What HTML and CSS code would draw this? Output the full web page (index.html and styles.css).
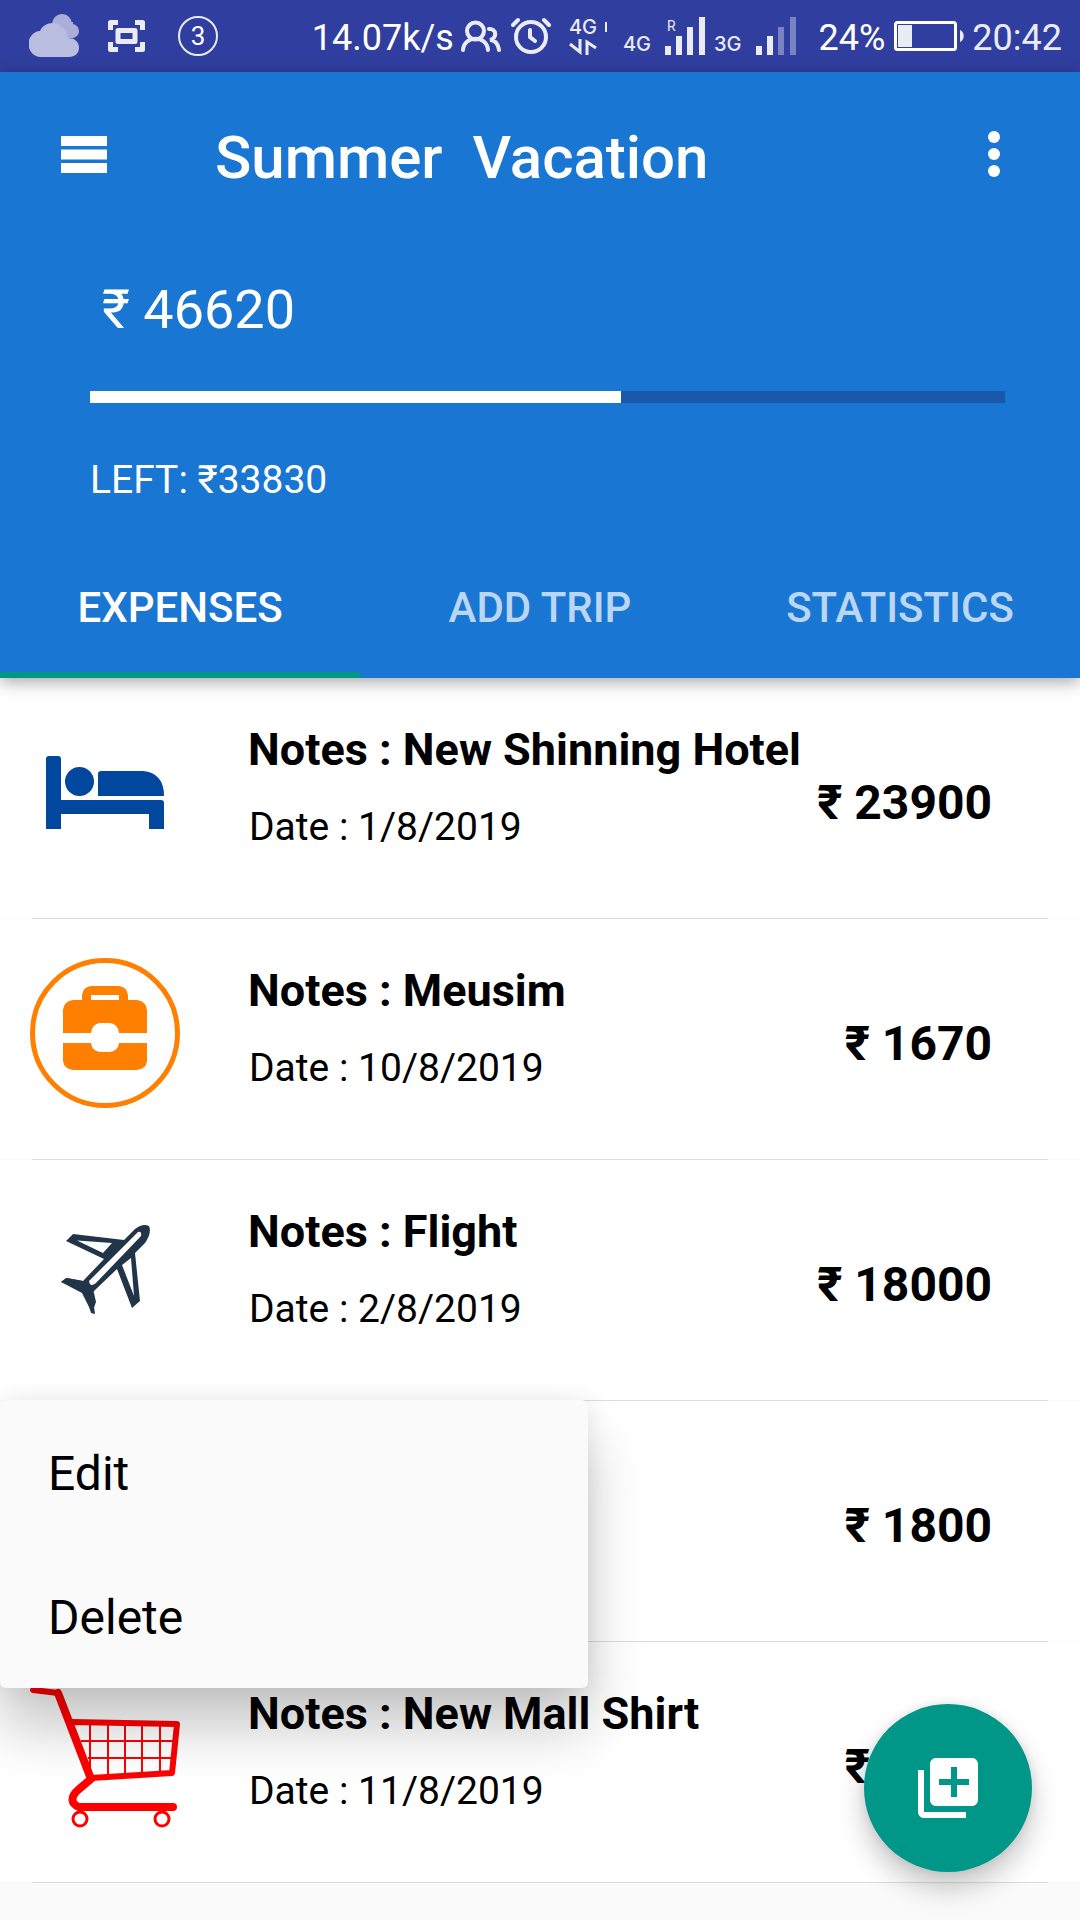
FILE: index.html
```html
<!DOCTYPE html>
<html lang="en">
<head>
<meta charset="utf-8">
<meta name="viewport" content="width=device-width, initial-scale=1">
<title>Summer Vacation</title>
<link rel="stylesheet" href="styles.css">
</head>
<body>
<div class="app">
  <div class="statusbar">
    <div class="status-group status-notices">
      <svg width="50" height="44" viewBox="0 0 50 44" aria-hidden="true">
        <g fill="#a9afd9"><circle cx="33" cy="10" r="10"/><circle cx="43" cy="17" r="7"/><path d="M26 8H44V24H26Z"/></g>
        <path fill="#b9bddf" d="M12 43a12 13 0 0 1-1-26C13 12 18 9 24 9c8 0 14 7 15 15 6 0 11 3 11 10 0 5-4 9-10 9Z"/>
      </svg>
      <svg width="37" height="32" viewBox="0 0 37 32" fill="none" stroke="#eaebf5" stroke-width="5" aria-hidden="true">
        <path stroke-linejoin="round" d="M2.500 10V2.500H10M27 2.500H34.500V10M2.500 22V29.500H10M27 29.500H34.500V22"/><path stroke-linejoin="round" d="M10 10.500H27V21.500H10Z"/>
      </svg>
      <span class="count">3</span>
    </div>
    <div class="status-group status-system">
      <span class="status-text">14.07k/s</span>
      <svg class="people" width="40" height="32" viewBox="0 0 40 32" fill="none" stroke="#eaebf5" stroke-width="4" stroke-linecap="round" aria-hidden="true">
        <circle cx="14.500" cy="11" r="8.500"/><path d="M2 30C3 15 26 15 27 30M28 9c7-1 9 9 1 11 5 0 8 4 9 10"/>
      </svg>
      <svg class="alarm" width="40" height="38" viewBox="0 0 40 38" fill="none" stroke="#eaebf5" stroke-width="4" stroke-linecap="round" aria-hidden="true">
        <circle cx="20" cy="20" r="15"/><path d="M2 8L7 3M38 8L33 3M19 13V20L24 24"/>
      </svg>
      <span class="data">
        <span class="net">4G<i class="tick"></i></span>
        <svg width="28" height="16" viewBox="0 0 28 16" fill="none" stroke="#eaebf5" stroke-width="3" aria-hidden="true"><path d="M1 5L11 13V0M18 16V3L27 9"/></svg>
      </span>
      <span class="net net-low net-one">4G</span>
      <span class="signal"><small>R</small>
        <svg width="40" height="38" viewBox="0 0 40 38" fill="#eaebf5" aria-hidden="true"><path d="M0 29H6V38H0ZM11 19H17V38H11ZM22 10H28V38H22ZM34 0H40V38H34Z"/></svg>
      </span>
      <span class="net net-low net-two">3G</span>
      <svg class="signal-two" width="40" height="38" viewBox="0 0 40 38" fill="#eaebf5" aria-hidden="true"><path d="M0 29H6V38H0ZM11 19H17V38H11Z"/><path opacity=".4" d="M22 10H28V38H22ZM34 0H40V38H34Z"/></svg>
      <span class="status-text percent">24%</span>
      <svg class="battery" width="70" height="30" viewBox="0 0 70 30" aria-hidden="true"><rect x="1.500" y="1.500" width="60" height="27" rx="2" fill="none" stroke="#fff" stroke-width="3"/><path fill="#eaebf5" d="M4 4H18V26H4ZM66 9c5 2 5 10 0 12Z"/></svg>
      <span class="status-text clock">20:42</span>
    </div>
  </div>

  <header class="header">
    <div class="toolbar">
      <button class="icon-button" type="button" aria-label="Open menu">
        <svg width="46" height="37" viewBox="0 0 46 37" fill="#fff"><path d="M0 0H46V10H0ZM0 13.500H46V23.500H0ZM0 27H46V37H0Z"/></svg>
      </button>
      <h1 class="title">Summer&nbsp; Vacation</h1>
      <button class="icon-button" type="button" aria-label="More options">
        <svg width="12" height="48" viewBox="0 0 12 48" fill="#fff"><circle cx="6" cy="7" r="6"/><circle cx="6" cy="24" r="6"/><circle cx="6" cy="41" r="6"/></svg>
      </button>
    </div>
    <div class="budget">
      <p class="spent">₹ 46620</p>
      <div class="progress" role="progressbar" aria-label="Budget spent" aria-valuenow="58" aria-valuemin="0" aria-valuemax="100"><div class="progress-fill" style="width:58%"></div></div>
      <p class="left">LEFT: ₹33830</p>
    </div>
    <nav class="tabs" role="tablist">
      <button class="tab tab-active" type="button" role="tab" aria-selected="true">EXPENSES</button>
      <button class="tab" type="button" role="tab" aria-selected="false">ADD TRIP</button>
      <button class="tab" type="button" role="tab" aria-selected="false">STATISTICS</button>
    </nav>
  </header>

  <main>
    <ul class="expenses">
      <li class="expense">
        <svg class="expense-icon" viewBox="0 0 150 150" fill="#00479d" aria-hidden="true">
          <path d="M16 42q0-3 3-3h9q3 0 3 3V83H131q3 0 3 3V112H119V97H31V112H16Z"/><circle cx="49.500" cy="64.500" r="14.500"/><path d="M68 57q0-3 3-3H113q21 2 21 25H68Z"/>
        </svg>
        <div class="details"><h2 class="note">Notes : New Shinning Hotel</h2><p class="date">Date : 1/8/2019</p></div>
        <p class="amount">₹ 23900</p>
      </li>
      <li class="expense">
        <svg class="expense-icon" viewBox="0 0 150 150" fill="#ff8000" aria-hidden="true">
          <circle cx="75" cy="75" r="72.500" fill="none" stroke="#ff8000" stroke-width="5"/>
          <path fill-rule="evenodd" d="M52 42V37q1-8 9-9H89q8 1 9 9v5h9q9 1 10 10V75H89q-1-9-9-10H70q-8 1-9 10H33V52q1-9 10-10ZM61 37V42H89V37Z"/>
          <path d="M33 85H61q1 8 9 9H80q8-1 9-9h28v18q-1 8-10 9H43q-9-1-10-9Z"/>
        </svg>
        <div class="details"><h2 class="note">Notes : Meusim</h2><p class="date">Date : 10/8/2019</p></div>
        <p class="amount">₹ 1670</p>
      </li>
      <li class="expense">
        <svg class="expense-icon" viewBox="0 0 150 150" fill="#223548" aria-hidden="true">
          <path fill-rule="evenodd" d="M36 42L43 35 94 41 105 30Q113 24 119 27 122 34 115 44L105 54 110 102 102 109 87 70 64 92Q62 95 65 115L61 114 56 96Q49 88 31 83L36 79 53 82 74 60ZM47 41.500L73 54 82 44ZM59 82Q60 89 66 84L111 37Q112 32 108 33ZM101 59L92 66 104 97Z"/>
          <path d="M31 83L37 79 53 82 64 94 66 103 62 114 52 94Z"/>
        </svg>
        <div class="details"><h2 class="note">Notes : Flight</h2><p class="date">Date : 2/8/2019</p></div>
        <p class="amount">₹ 18000</p>
      </li>
      <li class="expense">
        <div class="menu" role="menu">
          <button class="menu-item" type="button" role="menuitem">Edit</button>
          <button class="menu-item" type="button" role="menuitem">Delete</button>
        </div>
        <p class="amount">₹ 1800</p>
      </li>
      <li class="expense">
        <svg class="expense-icon" viewBox="0 0 150 150" fill="none" stroke="#f00" aria-hidden="true">
          <path stroke-width="6" stroke-linecap="round" stroke-linejoin="round" d="M3 9L28 12 61 97 142 92 147 43 42 41"/>
          <path stroke-width="8" stroke-linecap="round" stroke-linejoin="round" d="M28 12L61 98 48 109C40 116 41 123 49 126H143"/>
          <path stroke-width="2" d="M60 43V90M78 43V95M95 43V95M112 43V94M130 43V93M51 60H144M58 77H142"/>
          <circle cx="50" cy="138" r="7" stroke-width="3"/><circle cx="132" cy="138" r="7" stroke-width="3"/>
        </svg>
        <div class="details"><h2 class="note">Notes : New Mall Shirt</h2><p class="date">Date : 11/8/2019</p></div>
        <p class="amount">₹ 1250</p>
      </li>
    </ul>
  </main>

  <button class="fab" type="button" aria-label="Add expense">
    <svg width="72" height="72" viewBox="0 0 24 24" fill="#fff"><path d="M4 6H2v14c0 1.100.9 2 2 2h14v-2H4V6zm16-4H8c-1.100 0-2 .9-2 2v12c0 1.100.9 2 2 2h12c1.100 0 2-.9 2-2V4c0-1.100-.9-2-2-2zm-1 9h-4v4h-2v-4H9V9h4V5h2v4h4v2z"/></svg>
  </button>
</div>
</body>
</html>
```
FILE: styles.css
```css
* {
  box-sizing: border-box;
}

body {
  margin: 0;
  background: #fafafa;
  color: #000;
  font-family: Roboto, "Noto Sans", sans-serif;
}

h1, h2, p, ul {
  margin: 0;
  padding: 0;
}

button {
  border: 0;
  padding: 0;
  background: none;
  color: inherit;
  font-family: inherit;
}

svg {
  display: block;
  flex: none;
}

.app {
  min-height: 100vh;
}

/* System status bar */
.statusbar {
  display: flex;
  justify-content: space-between;
  height: 72px;
  padding: 0 18px 0 29px;
  background: #303f9f;
  color: #fff;
}

.status-group {
  display: flex;
  align-items: center;
}

.status-notices {
  gap: 29px;
}

.status-text {
  padding-top: 4px;
  font-size: 36px;
  line-height: 68px;
}

.count {
  width: 40px;
  height: 40px;
  margin-left: 4px;
  border: 2px solid #eaebf5;
  border-radius: 50%;
  font-size: 26px;
  line-height: 36px;
  text-align: center;
}

.people {
  margin-left: 7px;
}

.alarm {
  margin-left: 10px;
}

.data {
  display: flex;
  flex-direction: column;
  gap: 3px;
  width: 38px;
  margin-left: 18px;
}

.net {
  display: flex;
  justify-content: space-between;
  align-items: center;
  color: #eaebf5;
  font-family: Inter, sans-serif;
  font-size: 20px;
  font-weight: 500;
  line-height: 18px;
}

.net-low {
  padding-top: 16px;
}

.tick {
  width: 2px;
  height: 10px;
  background: #eaebf5;
}

.net-one {
  margin-left: 16px;
}

.signal {
  position: relative;
  margin-left: 14px;
}

.signal small {
  position: absolute;
  top: 2px;
  left: 2px;
  color: #eaebf5;
  font-size: 14px;
  line-height: 14px;
}

.net-two {
  margin-left: 9px;
}

.signal-two {
  margin-left: 14px;
}

.percent {
  margin-left: 23px;
}

.battery {
  margin-left: 9px;
}

.clock {
  margin-left: 8px;
  color: #eaebf5;
}

/* Trip header */
.header {
  position: relative;
  z-index: 1;
  background: #1976d2;
  box-shadow: 0 4px 16px rgba(0, 0, 0, 0.35);
  color: #fff;
}

.toolbar {
  display: flex;
  align-items: center;
  height: 164px;
  padding: 0 80px 0 61px;
}

.icon-button {
  flex: none;
}

.title {
  flex: 1;
  padding: 8px 0 0 108px;
  font-size: 60px;
  font-weight: 500;
  line-height: 72px;
}

.budget {
  padding: 42px 75px 30px 90px;
}

.spent {
  padding-left: 12px;
  font-size: 54px;
  line-height: 64px;
}

.progress {
  height: 12px;
  margin: 49px 0 53px;
  background: #1857a9;
}

.progress-fill {
  height: 100%;
  background: #fff;
}

.left {
  font-size: 39px;
  line-height: 48px;
}

.tabs {
  display: grid;
  grid-template-columns: repeat(3, 1fr);
}

.tab {
  height: 144px;
  padding-top: 10px;
  border-bottom: 6px solid transparent;
  color: #bad6f2;
  font-size: 42px;
  font-weight: 500;
  line-height: 48px;
}

.tab-active {
  border-color: #009688;
  color: #fff;
}

/* Expense list */
.expenses {
  list-style: none;
}

.expense {
  position: relative;
  display: flex;
  align-items: flex-start;
  height: 241px;
  padding: 0 88px 0 30px;
  border-bottom: 1px solid #fafafa;
  background: #fff;
}

.expense::after {
  content: "";
  position: absolute;
  right: 32px;
  bottom: -1px;
  left: 32px;
  height: 1px;
  background: #dcdcdc;
}

.expense-icon {
  width: 150px;
  height: 150px;
  margin: 39px 68px 0 0;
}

.details {
  display: flex;
  flex-direction: column;
  gap: 26px;
  padding-top: 45px;
}

.note {
  font-size: 45px;
  font-weight: 700;
  line-height: 54px;
  white-space: nowrap;
}

.date {
  padding-left: 1px;
  font-size: 39px;
  line-height: 48px;
}

.amount {
  margin-left: auto;
  padding-top: 97px;
  font-size: 48px;
  font-weight: 700;
  line-height: 56px;
  white-space: nowrap;
}

/* Row context menu */
.menu {
  position: absolute;
  z-index: 1;
  top: -1px;
  left: 0;
  display: flex;
  flex-direction: column;
  width: 588px;
  border-radius: 6px;
  background: #fafafa;
  box-shadow: 0 40px 56px rgba(0, 0, 0, 0.22), 0 0 24px rgba(0, 0, 0, 0.08);
}

.menu-item {
  height: 144px;
  padding: 4px 48px 0;
  font-size: 48px;
  line-height: 56px;
  text-align: left;
}

/* Floating action button */
.fab {
  position: fixed;
  z-index: 2;
  right: 48px;
  bottom: 48px;
  display: grid;
  place-items: center;
  width: 168px;
  height: 168px;
  border-radius: 50%;
  background: #009688;
  box-shadow: 0 16px 28px rgba(0, 0, 0, 0.22), 0 0 12px rgba(0, 0, 0, 0.1);
}
```
